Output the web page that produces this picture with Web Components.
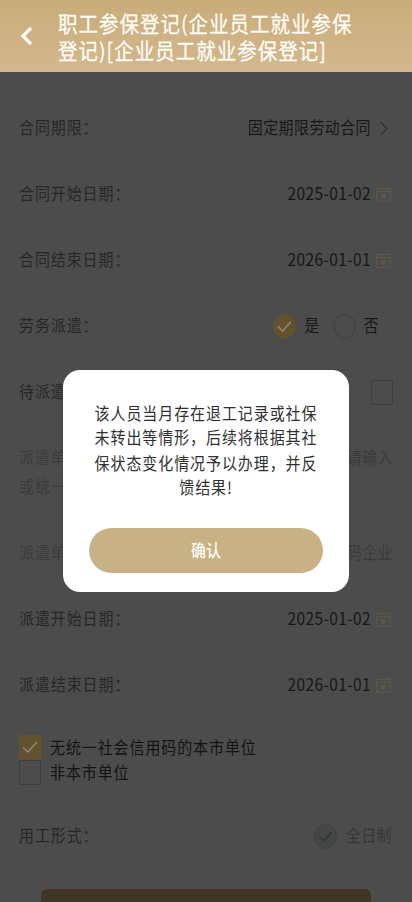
<!DOCTYPE html>
<html lang="zh-CN">
<head>
<meta charset="utf-8">
<meta name="viewport" content="width=device-width, initial-scale=1">
<title>职工参保登记</title>
<style>
html,body{margin:0;height:902px;overflow:hidden;background:#4c4c4c}
body{font-family:"Noto Sans CJK SC",sans-serif}
</style>
</head>
<body>
<reg-page></reg-page>
<script>
const define = (name, html, setup) => customElements.define(name, class extends HTMLElement {
  constructor() {
    super();
    const t = document.createElement('template');
    t.innerHTML = html;
    this.attachShadow({mode: 'open'}).appendChild(t.content.cloneNode(true));
  }
  connectedCallback() { if (setup) setup(this, this.shadowRoot); }
});

define('top-bar', `<style>
:host{display:flex;box-sizing:border-box;height:72px;background:linear-gradient(#c9ac79,#d3b88e);color:#fffdf6;align-items:center;padding-left:20px}
svg{width:14px;height:20px;flex:none;margin-right:24px}
.t{font-size:19.5px;letter-spacing:1px;line-height:24.5px;font-weight:400;-webkit-text-stroke:.25px;white-space:nowrap;transform:translateY(.5px) scaleY(1.09)}
</style><svg viewBox="0 0 14 20"><path d="M11 2 3 10l8 8" fill="none" stroke="currentColor" stroke-width="3.2"/></svg>
<div class="t"><slot></slot></div>`);

define('form-row', `<style>
:host{display:flex;box-sizing:border-box;height:66px;align-items:center;justify-content:space-between;padding:0 20px 0 19px;color:#171717;font-size:15px;line-height:24px}
.l{color:#272727;letter-spacing:.9px;transform:translateY(-1px) scaleY(1.1);white-space:nowrap}
.v{display:flex;align-items:center}
:host([faint]) .l,:host([faint]) .v{color:#3b3b3b}
:host([faint]) .v{margin-right:-1px}
</style><span class="l"></span><div class="v"><slot></slot></div>`,
(el, r) => { r.querySelector('.l').textContent = el.getAttribute('label'); });

define('tall-text', `<style>
:host{display:block;font-size:15px;line-height:24px;letter-spacing:.4px;transform:translateY(-1px) scaleY(1.1);white-space:nowrap}
</style><slot></slot>`);

define('date-value', `<style>
:host{display:flex;align-items:center}
span{font-size:15.5px;letter-spacing:.4px;transform:translateY(-1.5px) scaleY(1.13);margin-right:5px}
svg{width:15px;height:16px;margin-right:1px}
</style><span><slot></slot></span>
<svg viewBox="0 0 15 16" fill="none" stroke="#625845"><path d="M.6 2.5h13.8v12.8H.6zM.6 5.6h13.8M3.5.6v2M11.5.6v2"/><path d="M5.3 8.4h4v4h-4z" fill="#625845" stroke="none"/></svg>`);

define('round-mark', `<style>
:host{display:block;width:23px;height:25px}svg{display:block}
path{display:none;fill:none;stroke:#8b8577;stroke-width:1.7}ellipse{fill:none;stroke:#3f3f3f}
:host([state=on]) ellipse{fill:#64522f;stroke:#64522f}
:host([state=on]) path{display:block}
:host([state=off]) ellipse{fill:#454747;stroke:#3f4242}
:host([state=off]) path{display:block;stroke:#333737;stroke-width:2}
</style><svg width="23" height="25" viewBox="0 0 23 25"><ellipse cx="11.5" cy="12.5" rx="10.8" ry="11.9"/><path d="m5 12.4 4.6 4.6 8.2-9.2"/></svg>`);

define('square-mark', `<style>
:host{display:block;box-sizing:border-box;width:22px;height:25px;border:1px solid #3d3d3d}
:host([checked]){background:#64522f;border-color:#64522f}
svg{display:none}:host([checked]) svg{display:block}
</style><svg width="20" height="23" viewBox="0 0 20 23"><path d="m3 11.5 4.8 4.5L17 6" fill="none" stroke="#91897b" stroke-width="1.5"/></svg>`);

define('check-line', `<style>
:host{display:flex;align-items:center;gap:9px;height:25px;padding-left:19px;color:#141414}
tall-text{letter-spacing:.9px}
</style><square-mark></square-mark><tall-text><slot></slot></tall-text>`,
(el, r) => { if (el.hasAttribute('checked')) r.querySelector('square-mark').setAttribute('checked', ''); });

define('confirm-dialog', `<style>
:host{position:absolute;left:63px;top:370px;width:286px;height:222px;box-sizing:border-box;background:#fff;border-radius:17px;display:flex;flex-direction:column;align-items:center;justify-content:space-between;padding:32px 26px 19px}
.m{font-size:15px;letter-spacing:.92px;line-height:22.25px;color:#303030;text-align:center;white-space:nowrap;transform:translateY(-.5px) scaleY(1.1);transform-origin:top}
.b{width:234px;height:45px;border-radius:23px;background:#c8b285;color:#fffdf8;display:flex;align-items:center;justify-content:center;font-size:15px;font-weight:500}
.b span{transform:translateY(-1px) scaleY(1.1)}
</style><div class="m"><slot></slot></div><div class="b"><span>确认</span></div>`);

define('reg-page', `<style>
:host{display:block;position:relative;width:412px;height:902px;overflow:hidden;background:#4c4c4c}
main{display:flex;flex-direction:column;padding-top:23px}
.chev{margin:0 4px 0 9px}
.radios{display:flex;align-items:center}
.note{padding:0 20px 0 19px;height:29px;color:#3b3b3b;margin-top:-16px;margin-bottom:16px}
.note tall-text{letter-spacing:1px}
.checks{padding:17px 0 18px}
.cta{height:40px;margin:20px 41px 0;background:#3f3524;border-radius:6px}
</style>
<top-bar>职工参保登记(企业员工就业参保<br>登记)[企业员工就业参保登记]</top-bar>
<main>
<form-row label="合同期限："><tall-text>固定期限劳动合同</tall-text><svg class="chev" width="8" height="15" viewBox="0 0 8 15"><path d="m.8 1 6.4 6.5L.8 14" fill="none" stroke="#303030" stroke-width="1.2"/></svg></form-row>
<form-row label="合同开始日期："><date-value>2025-01-02</date-value></form-row>
<form-row label="合同结束日期："><date-value>2026-01-01</date-value></form-row>
<form-row label="劳务派遣："><div class="radios"><round-mark state="on"></round-mark><tall-text style="margin:0 13px 0 8px">是</tall-text><round-mark></round-mark><tall-text style="margin:0 13px 0 8px">否</tall-text></div></form-row>
<form-row label="待派遣"><square-mark style="margin-right:-1px"></square-mark></form-row>
<form-row faint label="派遣单"><tall-text>请输入</tall-text></form-row>
<div class="note"><tall-text>或统一</tall-text></div>
<form-row faint label="派遣单"><tall-text>码企业</tall-text></form-row>
<form-row label="派遣开始日期："><date-value>2025-01-02</date-value></form-row>
<form-row label="派遣结束日期："><date-value>2026-01-01</date-value></form-row>
<div class="checks"><check-line checked>无统一社会信用码的本市单位</check-line><check-line>非本市单位</check-line></div>
<form-row label="用工形式："><round-mark state="off"></round-mark><tall-text style="margin-left:9px;color:#363636">全日制</tall-text></form-row>
<div class="cta"></div>
</main>
<confirm-dialog>该人员当月存在退工记录或社保<br>未转出等情形，后续将根据其社<br>保状态变化情况予以办理，并反<br>馈结果!</confirm-dialog>`);
</script>
</body>
</html>
